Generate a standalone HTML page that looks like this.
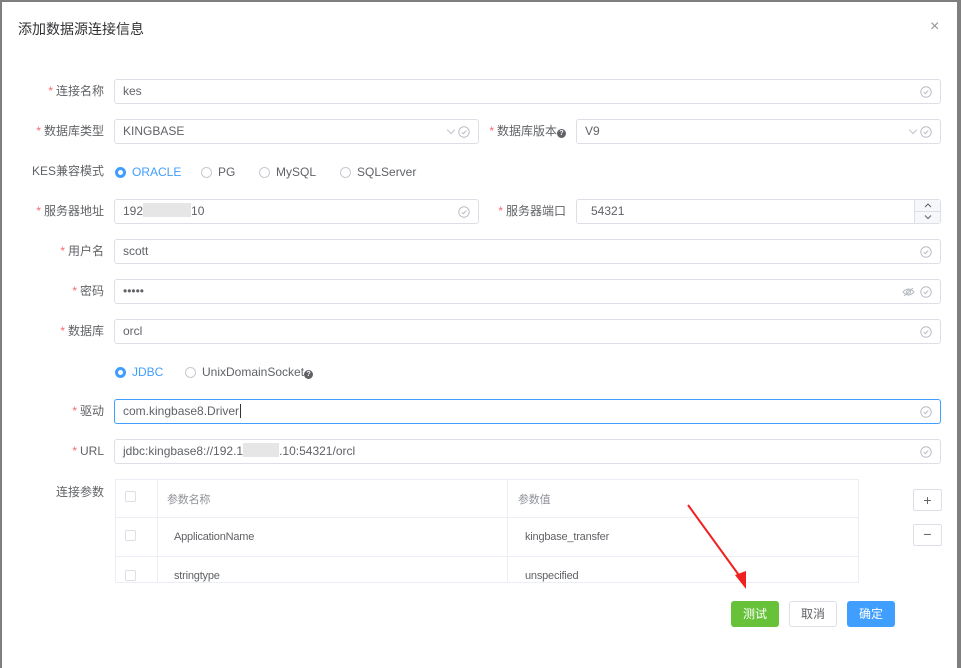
<!DOCTYPE html>
<html><head><meta charset="utf-8"><style>
*{box-sizing:border-box;margin:0;padding:0}
body{width:961px;height:668px;overflow:hidden;background:#fff;font-family:"Liberation Sans","Noto Sans CJK SC",sans-serif;font-size:12px;color:#606266;position:relative}
.frame{position:absolute;background:#7f7f7f}
.a{position:absolute}
.lbl{position:absolute;text-align:right;font-size:12px;color:#606266;line-height:24px}
.lbl i{color:#f56c6c;font-style:normal;margin-right:3px}
.inp{position:absolute;height:25px;border:1px solid #dcdfe6;border-radius:3px;background:#fff;padding-left:8px;line-height:23px;font-size:12px;color:#606266}
.chk{position:absolute;top:6px;width:12px;height:12px}
.chk2{position:absolute;width:11px;height:11px;border:1px solid #dcdfe6;border-radius:2px}
.arrow{position:absolute;right:24px;top:7px;width:6px;height:6px;border-right:1px solid #c0c4cc;border-bottom:1px solid #c0c4cc;transform:rotate(45deg)}
.radio{position:absolute;line-height:14px;font-size:12px}
.radio b{display:inline-block;width:11px;height:11px;border:1px solid #c6c9cf;border-radius:50%;vertical-align:-2px;margin-right:6px;background:#fff}
.radio.on{color:#409eff}
.radio.on b{border:3px solid #409eff}
.q{display:inline-block;width:9px;height:9px;border-radius:50%;background:#606266;color:#fff;font-size:7px;line-height:9px;text-align:center;font-weight:bold;vertical-align:0}
.btn{position:absolute;height:26px;top:601px;border-radius:3px;font-size:12px;line-height:26px;text-align:center;width:48px}
.t{font-size:11px;letter-spacing:-0.2px}
</style></head><body>
<svg width="0" height="0" style="position:absolute"><defs><symbol id="ck" viewBox="0 0 12 12"><circle cx="6" cy="6" r="5.2" fill="none" stroke="#b8bbc2" stroke-width="1"/><path d="M3.6 6.2 L5.3 7.8 L8.4 4.4" fill="none" stroke="#b8bbc2" stroke-width="1"/></symbol></defs></svg>
<div class="frame" style="left:0;top:0;width:961px;height:2px"></div>
<div class="frame" style="left:0;top:0;width:2px;height:668px"></div>
<div class="frame" style="left:957px;top:0;width:4px;height:668px"></div>
<div class="a" style="left:18px;top:19px;font-size:14px;color:#303133">添加数据源连接信息</div>
<div class="a" style="left:930px;top:18px;font-size:16px;color:#909399">×</div>

<div class="lbl" style="left:0;width:104px;top:79px"><i>*</i>连接名称</div>
<div class="inp" style="left:114px;top:79px;width:827px">kes<svg class="chk" style="right:8px"><use href="#ck"/></svg></div>

<div class="lbl" style="left:0;width:104px;top:119px"><i>*</i>数据库类型</div>
<div class="inp" style="left:114px;top:119px;width:365px">KINGBASE<span class="arrow"></span><svg class="chk" style="right:8px"><use href="#ck"/></svg></div>
<div class="lbl" style="left:480px;width:86px;top:119px"><i>*</i>数据库版本<span class="q">?</span></div>
<div class="inp" style="left:576px;top:119px;width:365px">V9<span class="arrow"></span><svg class="chk" style="right:8px"><use href="#ck"/></svg></div>

<div class="lbl" style="left:0;width:104px;top:159px">KES兼容模式</div>
<div class="radio on" style="left:115px;top:165px"><b></b>ORACLE</div>
<div class="radio" style="left:201px;top:165px"><b></b>PG</div>
<div class="radio" style="left:259px;top:165px"><b></b>MySQL</div>
<div class="radio" style="left:340px;top:165px"><b></b>SQLServer</div>

<div class="lbl" style="left:0;width:104px;top:199px"><i>*</i>服务器地址</div>
<div class="inp" style="left:114px;top:199px;width:365px">192<span style="display:inline-block;width:48px;height:14px;background:#e6e6e6;vertical-align:-2px"></span>10<svg class="chk" style="right:8px"><use href="#ck"/></svg></div>
<div class="lbl" style="left:480px;width:86px;top:199px"><i>*</i>服务器端口</div>
<div class="inp" style="left:576px;top:199px;width:365px;padding-left:14px">54321
<div class="a" style="right:0;top:0;width:26px;height:23px;background:#f5f7fa;border-left:1px solid #dcdfe6">
<svg width="26" height="23" style="position:absolute;left:0;top:0"><line x1="0" y1="11.5" x2="26" y2="11.5" stroke="#dcdfe6"/><path d="M10 7 L13 4 L16 7" fill="none" stroke="#606266"/><path d="M10 15.5 L13 18.5 L16 15.5" fill="none" stroke="#606266"/></svg></div></div>

<div class="lbl" style="left:0;width:104px;top:239px"><i>*</i>用户名</div>
<div class="inp" style="left:114px;top:239px;width:827px">scott<svg class="chk" style="right:8px"><use href="#ck"/></svg></div>
<div class="lbl" style="left:0;width:104px;top:279px"><i>*</i>密码</div>
<div class="inp" style="left:114px;top:279px;width:827px">•••••<svg class="a" style="right:25px;top:7px" width="13" height="10"><path d="M1 5 Q6.5 -1 12 5 Q6.5 11 1 5Z" fill="none" stroke="#b8bbc2"/><circle cx="6.5" cy="5" r="2" fill="none" stroke="#b8bbc2"/><line x1="2" y1="9" x2="11" y2="1" stroke="#b8bbc2"/></svg><svg class="chk" style="right:8px"><use href="#ck"/></svg></div>
<div class="lbl" style="left:0;width:104px;top:319px"><i>*</i>数据库</div>
<div class="inp" style="left:114px;top:319px;width:827px">orcl<svg class="chk" style="right:8px"><use href="#ck"/></svg></div>

<div class="radio on" style="left:115px;top:365px"><b></b>JDBC</div>
<div class="radio" style="left:185px;top:365px"><b></b>UnixDomainSocket<span class="q">?</span></div>

<div class="lbl" style="left:0;width:104px;top:399px"><i>*</i>驱动</div>
<div class="inp" style="left:114px;top:399px;width:827px;border-color:#409eff">com.kingbase8.Driver<span style="border-left:1px solid #333;margin-left:1px"></span><svg class="chk" style="right:8px"><use href="#ck"/></svg></div>
<div class="lbl" style="left:0;width:104px;top:439px"><i>*</i>URL</div>
<div class="inp" style="left:114px;top:439px;width:827px">jdbc:kingbase8://192.1<span style="display:inline-block;width:36px;height:14px;background:#e6e6e6;vertical-align:-2px"></span>.10:54321/orcl<svg class="chk" style="right:8px"><use href="#ck"/></svg></div>

<div class="lbl" style="left:0;width:104px;top:480px">连接参数</div>
<div class="a t" style="left:115px;top:479px;width:744px;height:104px;border:1px solid #ebeef5;overflow:hidden">
<div class="a" style="left:41px;top:0;width:1px;height:110px;background:#ebeef5"></div>
<div class="a" style="left:391px;top:0;width:1px;height:110px;background:#ebeef5"></div>
<div class="a" style="left:0;top:37px;width:744px;height:1px;background:#ebeef5"></div>
<div class="a" style="left:0;top:76px;width:744px;height:1px;background:#ebeef5"></div>
<div class="chk2" style="left:9px;top:11px"></div>
<div class="chk2" style="left:9px;top:50px"></div>
<div class="chk2" style="left:9px;top:90px"></div>
<div class="a" style="left:51px;top:11px;color:#909399">参数名称</div>
<div class="a" style="left:402px;top:11px;color:#909399">参数值</div>
<div class="a" style="left:58px;top:51px">ApplicationName</div>
<div class="a" style="left:409px;top:51px">kingbase_transfer</div>
<div class="a" style="left:58px;top:90px">stringtype</div>
<div class="a" style="left:409px;top:90px">unspecified</div>
</div>
<div class="a" style="left:913px;top:489px;width:29px;height:22px;border:1px solid #dcdfe6;border-radius:2px;text-align:center;line-height:20px;font-size:14px">+</div>
<div class="a" style="left:913px;top:524px;width:29px;height:22px;border:1px solid #dcdfe6;border-radius:2px;text-align:center;line-height:19px;font-size:14px">−</div>

<svg class="a" style="left:0;top:0" width="961" height="668"><line x1="688" y1="505" x2="741" y2="578" stroke="#f02020" stroke-width="2"/><polygon points="746,589 735,575 746,571" fill="#f02020"/></svg>

<div class="btn" style="left:731px;background:#67c23a;color:#fff">测试</div>
<div class="btn" style="left:789px;border:1px solid #dcdfe6;color:#606266;line-height:24px">取消</div>
<div class="btn" style="left:847px;background:#409eff;color:#fff">确定</div>
</body></html>
